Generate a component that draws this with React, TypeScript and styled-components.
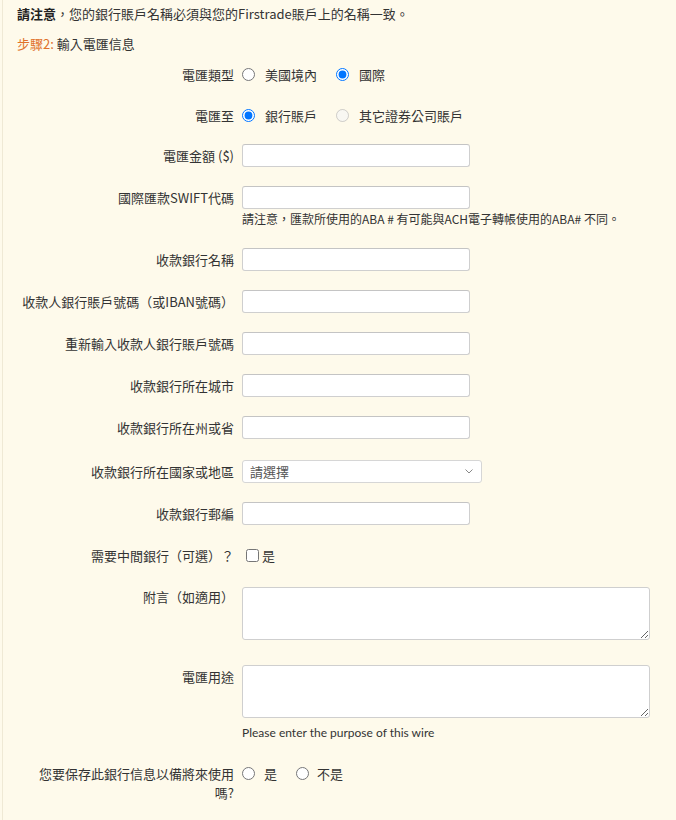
import React from "react";
import styled, { createGlobalStyle } from "styled-components";

const GlobalStyle = createGlobalStyle`
  html, body {
    margin: 0;
    padding: 0;
    background: #fefaeb;
  }
  body {
    font-family: "Noto Sans CJK TC", "Noto Sans", sans-serif;
    font-size: 13px;
    color: #333;
  }
`;

const Page = styled.div`
  min-height: 820px;
  box-sizing: border-box;
  padding-top: 4px;
  margin-left: 2px;
  border-left: 1px solid #efe9d5;
`;

const Notice = styled.div`
  padding-left: 14px;
  line-height: 19px;
  strong {
    font-weight: 700;
    color: #222;
  }
`;

const StepTitle = styled.div`
  padding-left: 14px;
  margin-top: 11px;
  line-height: 19px;
`;

const StepTag = styled.span`
  color: #e0712a;
`;

const Row = styled.div<{ $mt: number }>`
  display: grid;
  grid-template-columns: 231px 1fr;
  column-gap: 8px;
  align-items: start;
  margin-top: ${(p) => p.$mt}px;
`;

const Label = styled.div<{ $lh?: number; $pt?: number }>`
  text-align: right;
  white-space: nowrap;
  line-height: ${(p) => p.$lh ?? 23}px;
  padding-top: ${(p) => p.$pt ?? 0}px;
`;

const Field = styled.div`
  display: flex;
  flex-direction: column;
  align-items: flex-start;
`;

const TextInput = styled.input`
  box-sizing: border-box;
  width: 228px;
  height: 23px;
  margin: 0;
  padding: 0 6px;
  border: 1px solid #cfcfcf;
  border-top-color: #c4c4c4;
  border-radius: 3px;
  background: #fff;
  font: inherit;
  outline: none;
`;

const SelectWrap = styled.div`
  position: relative;
  width: 240px;
  height: 23px;
`;

const Select = styled.select`
  box-sizing: border-box;
  width: 100%;
  height: 100%;
  margin: 0;
  padding: 0 20px 0 7px;
  border: 1px solid #d6d6d6;
  border-radius: 3px;
  background: #fff;
  appearance: none;
  font: inherit;
  color: #555;
  outline: none;
`;

const Chevron = styled.svg`
  position: absolute;
  right: 9px;
  top: 9px;
  width: 8px;
  height: 5px;
  pointer-events: none;
`;

const TextArea = styled.textarea`
  box-sizing: border-box;
  width: 408px;
  height: 53px;
  margin: 0;
  padding: 4px 6px;
  border: 1px solid #cfcfcf;
  border-radius: 3px;
  background: #fff;
  font: inherit;
  outline: none;
`;

const Hint = styled.div<{ $mt: number }>`
  margin-top: ${(p) => p.$mt}px;
  font-size: 12px;
  line-height: 16px;
  color: #333;
  white-space: nowrap;
`;

const HintLatin = styled(Hint)`
  font-family: "Lato", "Noto Sans CJK TC", sans-serif;
`;

const ChoiceGroup = styled.div<{ $h?: number }>`
  display: flex;
  align-items: center;
  height: ${(p) => p.$h ?? 23}px;
`;

const RadioOption = styled.label<{ $gap?: number }>`
  display: inline-flex;
  align-items: center;
  gap: ${(p) => p.$gap ?? 10}px;
  margin-right: 19px;
  line-height: 23px;
  color: #333;
`;

const Radio = styled.input.attrs({ type: "radio" })`
  width: 13px;
  height: 13px;
  margin: 0;
`;

const CheckOption = styled.label`
  display: inline-flex;
  align-items: center;
  line-height: 23px;
`;

const Checkbox = styled.input.attrs({ type: "checkbox" })`
  width: 13px;
  height: 13px;
  margin: 0 3px 0 4px;
`;

const inputRows: { label: string; mt: number }[] = [
  { label: "收款銀行名稱", mt: 21 },
  { label: "收款人銀行賬戶號碼（或IBAN號碼）", mt: 19 },
  { label: "重新輸入收款人銀行賬戶號碼", mt: 19 },
  { label: "收款銀行所在城市", mt: 19 },
  { label: "收款銀行所在州或省", mt: 19 },
];

export default function App() {
  return (
    <>
      <GlobalStyle />
      <Page>
        <Notice>
          <strong>請注意</strong>，您的銀行賬戶名稱必須與您的Firstrade賬戶上的名稱一致。
        </Notice>
        <StepTitle>
          <StepTag>步驟2:</StepTag> 輸入電匯信息
        </StepTitle>

        <Row $mt={10}>
          <Label>電匯類型</Label>
          <ChoiceGroup>
            <RadioOption>
              <Radio name="wireType" />
              美國境內
            </RadioOption>
            <RadioOption>
              <Radio name="wireType" defaultChecked />
              國際
            </RadioOption>
          </ChoiceGroup>
        </Row>

        <Row $mt={18}>
          <Label>電匯至</Label>
          <ChoiceGroup>
            <RadioOption>
              <Radio name="wireTo" defaultChecked />
              銀行賬戶
            </RadioOption>
            <RadioOption>
              <Radio name="wireTo" disabled />
              其它證券公司賬戶
            </RadioOption>
          </ChoiceGroup>
        </Row>

        <Row $mt={17}>
          <Label>電匯金額 ($)</Label>
          <Field>
            <TextInput />
          </Field>
        </Row>

        <Row $mt={19}>
          <Label>國際匯款SWIFT代碼</Label>
          <Field>
            <TextInput />
            <Hint $mt={2}>請注意，匯款所使用的ABA # 有可能與ACH電子轉帳使用的ABA# 不同。</Hint>
          </Field>
        </Row>

        {inputRows.map((r) => (
          <Row key={r.label} $mt={r.mt}>
            <Label>{r.label}</Label>
            <Field>
              <TextInput />
            </Field>
          </Row>
        ))}

        <Row $mt={21}>
          <Label>收款銀行所在國家或地區</Label>
          <Field>
            <SelectWrap>
              <Select defaultValue="">
                <option value="">請選擇</option>
              </Select>
              <Chevron viewBox="0 0 8 5">
                <path d="M0.5 0.5 L4 4 L7.5 0.5" fill="none" stroke="#888" strokeWidth="1" />
              </Chevron>
            </SelectWrap>
          </Field>
        </Row>

        <Row $mt={19}>
          <Label>收款銀行郵編</Label>
          <Field>
            <TextInput />
          </Field>
        </Row>

        <Row $mt={19}>
          <Label>需要中間銀行（可選）？</Label>
          <ChoiceGroup>
            <CheckOption>
              <Checkbox />是
            </CheckOption>
          </ChoiceGroup>
        </Row>

        <Row $mt={20}>
          <Label $lh={20} $pt={0}>附言（如適用）</Label>
          <Field>
            <TextArea />
          </Field>
        </Row>

        <Row $mt={25}>
          <Label $lh={20} $pt={2}>電匯用途</Label>
          <Field>
            <TextArea />
            <HintLatin $mt={7}>Please enter the purpose of this wire</HintLatin>
          </Field>
        </Row>

        <Row $mt={23}>
          <Label $lh={19}>
            您要保存此銀行信息以備將來使用
            <br />
            嗎?
          </Label>
          <ChoiceGroup $h={19}>
            <RadioOption $gap={9}>
              <Radio name="save" />是
            </RadioOption>
            <RadioOption $gap={8}>
              <Radio name="save" />不是
            </RadioOption>
          </ChoiceGroup>
        </Row>
      </Page>
    </>
  );
}
